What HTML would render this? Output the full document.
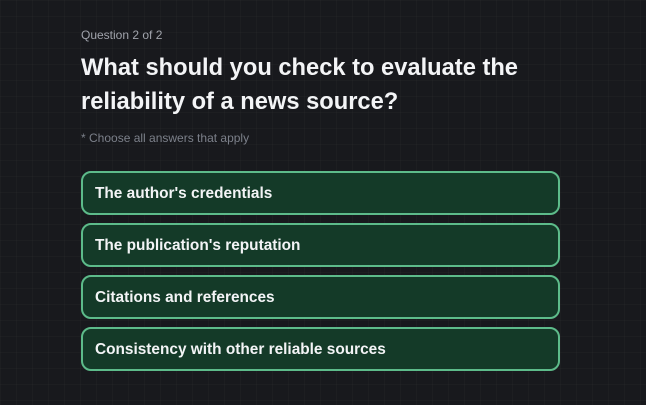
<!DOCTYPE html>
<html><head><style>
body{margin:0;width:646px;height:405px;overflow:hidden;background:#18191d;
background-image:linear-gradient(rgba(255,255,255,0.02) 1px,transparent 1px),linear-gradient(90deg,rgba(255,255,255,0.02) 1px,transparent 1px);background-size:16px 16px;
font-family:"Liberation Sans",sans-serif;}
.q{position:absolute;left:81px;top:28px;font-size:12px;color:#a0a3ab;}
h1{position:absolute;left:81px;top:51px;margin:0;font-size:23.7px;line-height:34px;color:#f3f4f6;font-weight:600;width:480px;}
.n{position:absolute;left:81px;top:131px;font-size:12px;color:#7c808a;}
.o{position:absolute;left:81px;height:40px;border:2px solid #5dbb8a;border-radius:10px;background:#143a28;color:#f3f4f6;font-size:15.4px;font-weight:600;line-height:42px;padding-left:12px;width:463px;}
</style></head><body>
<div class="q">Question 2 of 2</div>
<h1>What should you check to evaluate the reliability of a news source?</h1>
<div class="n">* Choose all answers that apply</div>
<div class="o" style="top:171px">The author's credentials</div>
<div class="o" style="top:223px">The publication's reputation</div>
<div class="o" style="top:275px">Citations and references</div>
<div class="o" style="top:327px">Consistency with other reliable sources</div>
</body></html>
